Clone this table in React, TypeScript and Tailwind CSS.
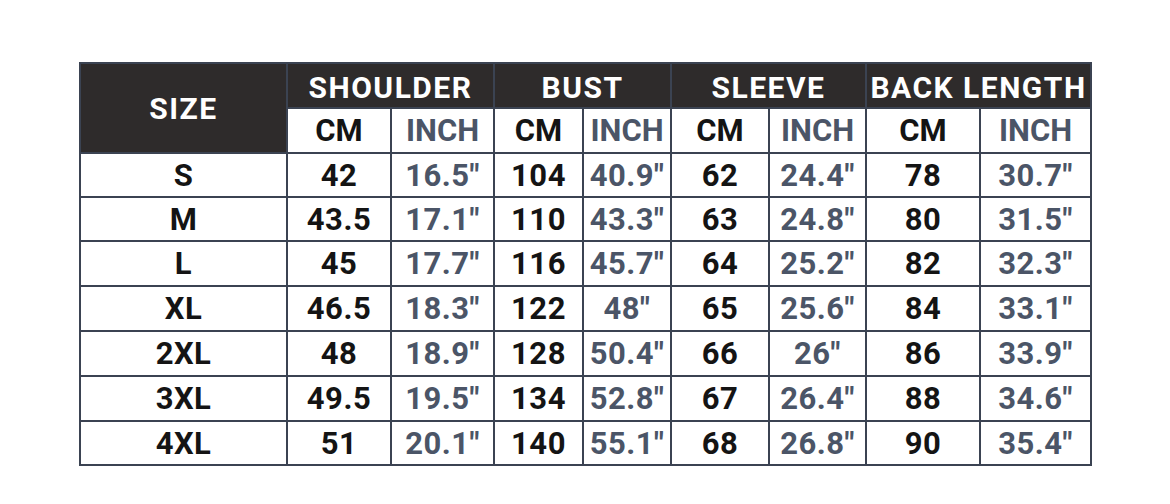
const groups = ["SHOULDER", "BUST", "SLEEVE", "BACK LENGTH"];

const rows: [string, string, string, string, string, string, string, string, string][] = [
  ["S", "42", '16.5"', "104", '40.9"', "62", '24.4"', "78", '30.7"'],
  ["M", "43.5", '17.1"', "110", '43.3"', "63", '24.8"', "80", '31.5"'],
  ["L", "45", '17.7"', "116", '45.7"', "64", '25.2"', "82", '32.3"'],
  ["XL", "46.5", '18.3"', "122", '48"', "65", '25.6"', "84", '33.1"'],
  ["2XL", "48", '18.9"', "128", '50.4"', "66", '26"', "86", '33.9"'],
  ["3XL", "49.5", '19.5"', "134", '52.8"', "67", '26.4"', "88", '34.6"'],
  ["4XL", "51", '20.1"', "140", '55.1"', "68", '26.8"', "90", '35.4"'],
];

export default function App() {
  return (
    <div
      className="min-h-screen bg-white pl-[79px] pt-[62px]"
      style={{ fontFamily: 'Roboto, "Liberation Sans", sans-serif' }}
    >
      <div className="inline-grid grid-cols-[205px_102px_101px_87px_86px_96px_95px_112px_109px] grid-rows-[43px_43px_42px_42px_43px_43px_43px_43px_42px] gap-[2px] bg-[#3b4352] p-[2px] font-bold">
        <div className="row-span-2 flex items-center justify-center bg-[#2e2b2b] text-[30px] tracking-[1.5px] text-white">
          SIZE
        </div>
        {groups.map((g) => (
          <div
            key={g}
            className="col-span-2 flex items-center justify-center bg-[#2e2b2b] pt-1 text-[30px] leading-none tracking-[1.5px] whitespace-nowrap text-white"
          >
            {g}
          </div>
        ))}
        {groups.map((g) => (
          <div key={g} className="contents">
            <div className="flex items-center justify-center bg-white text-[31px] leading-none text-[#141414]">
              CM
            </div>
            <div className="flex items-center justify-center bg-white text-[31px] leading-none text-[#4b5567]">
              INCH
            </div>
          </div>
        ))}
        {rows.map((r) =>
          r.map((cell, i) => (
            <div
              key={r[0] + i}
              className={
                i > 0 && i % 2 === 0
                  ? "flex items-center justify-center bg-white text-[31px] leading-none tracking-[0.5px] text-[#4b5567]"
                  : "flex items-center justify-center bg-white text-[31px] leading-none tracking-[0.5px] text-[#141414]"
              }
            >
              {cell}
            </div>
          ))
        )}
      </div>
    </div>
  );
}
